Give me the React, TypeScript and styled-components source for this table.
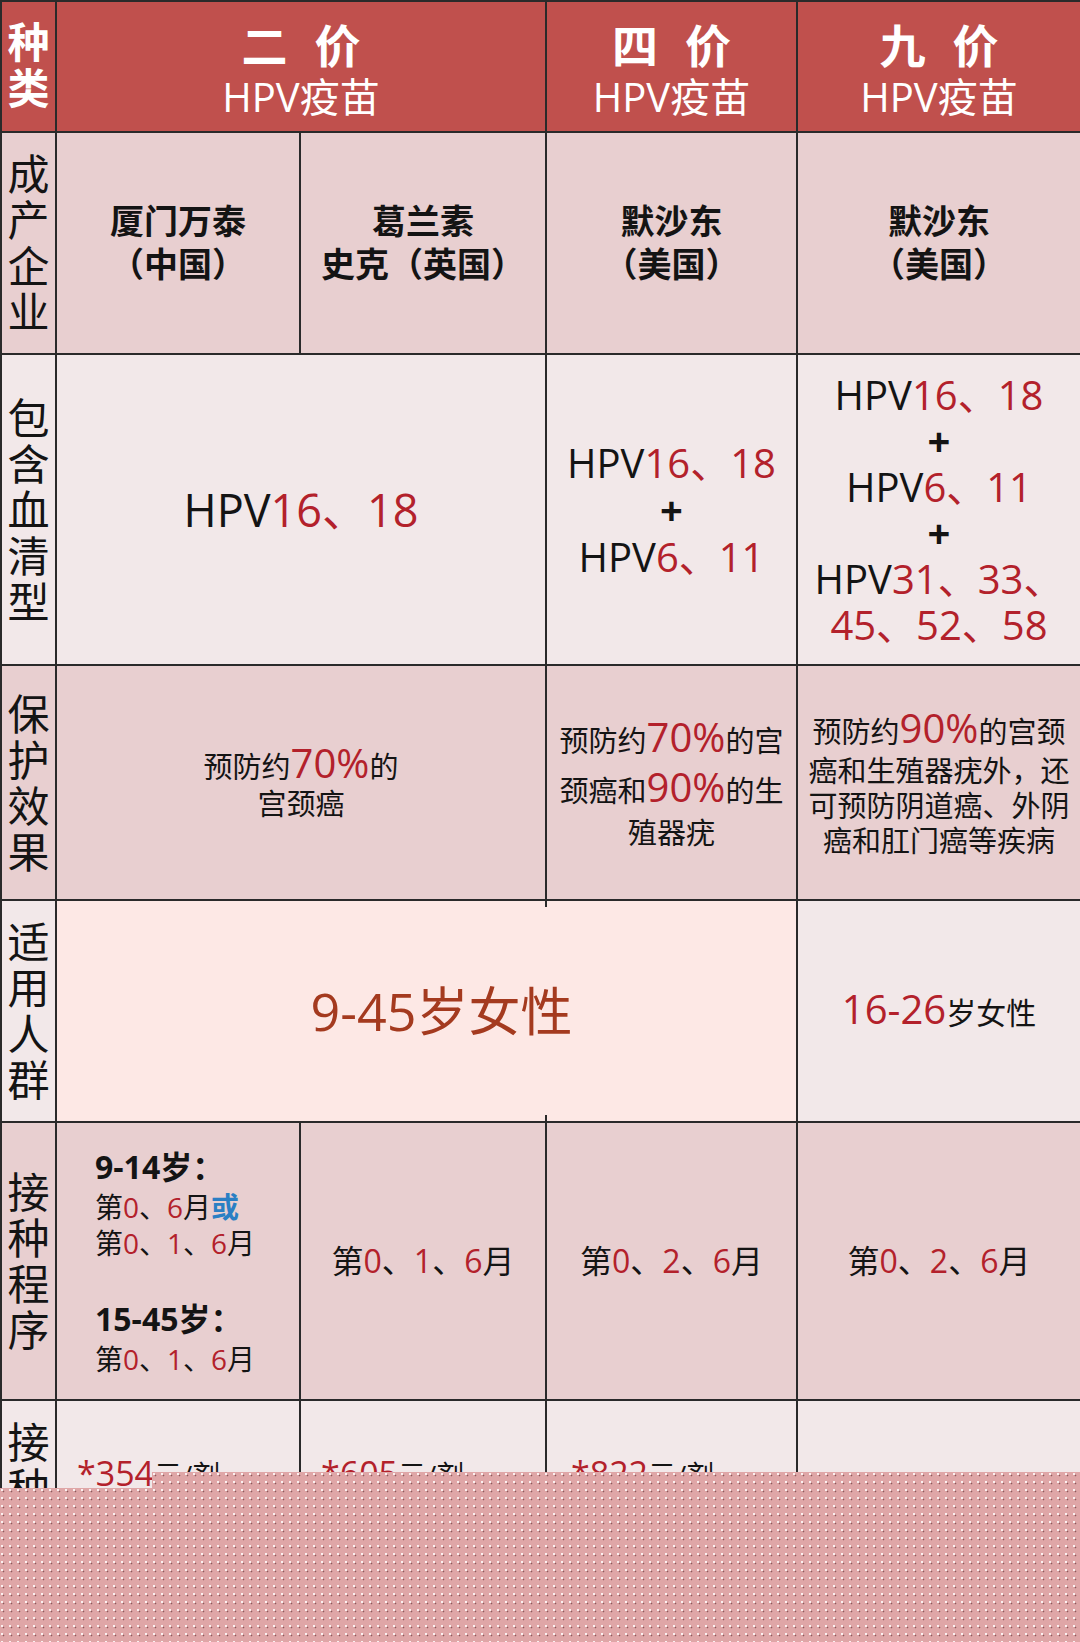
import React from "react";
import styled, { createGlobalStyle } from "styled-components";

const LINE = "#2a2a2a";
const INK = "#141414";
const RED = "#b3212b";
const HEAD = "#c0504d";
const PINK = "#e8cfd0";
const LIGHT = "#f2e8e9";
const PEACH = "#fde8e5";
const FONT = `"Open Sans", "Noto Sans CJK SC", sans-serif`;

const Global = createGlobalStyle`
  html, body { margin: 0; padding: 0; background: ${LIGHT}; }
  body { font-family: ${FONT}; }
`;

const Page = styled.div`
  position: relative;
  width: 1080px;
  height: 1642px;
  overflow: hidden;
  background: ${LIGHT};
  font-family: ${FONT};
`;

const Table = styled.div`
  display: grid;
  grid-template-columns: 55px 244px 246px 251px 282px;
  grid-template-rows: 131px 222px 311px 235px 222px 278px 320px;
  border-top: 2px solid ${LINE};
  border-left: 2px solid ${LINE};
`;

const Cell = styled.div<{ $bg: string; $span?: number; $edge?: boolean }>`
  box-sizing: border-box;
  position: relative;
  grid-column: span ${(p) => p.$span ?? 1};
  background: ${(p) => p.$bg};
  border-bottom: 2px solid ${LINE};
  border-right: ${(p) => (p.$edge ? "none" : `2px solid ${LINE}`)};
  display: flex;
  flex-direction: column;
  align-items: center;
  justify-content: center;
  text-align: center;
  color: ${INK};
  white-space: nowrap;
`;

const LabelCell = styled(Cell)<{ $head?: boolean; $top?: number }>`
  font-size: 42px;
  line-height: 46px;
  font-weight: ${(p) => (p.$head ? 700 : 400)};
  color: ${(p) => (p.$head ? "#fff" : INK)};
  justify-content: ${(p) => (p.$top != null ? "flex-start" : "center")};
  padding-top: ${(p) => p.$top ?? 0}px;
  padding-bottom: ${(p) => (p.$head ? 4 : 0)}px;
`;

const LabelChar = styled.span`
  display: block;
`;

const HeadCell = styled(Cell)`
  color: #fff;
`;

const HeadTitle = styled.div`
  font-size: 46px;
  line-height: 60px;
  font-weight: 700;
  word-spacing: 15px;
`;

const HeadSub = styled.div`
  font-size: 40px;
  line-height: 44px;
  font-weight: 400;
`;

const Company = styled.div`
  font-size: 34px;
  line-height: 43px;
  font-weight: 700;
`;

const Sero = styled.div<{ $size: number; $lh: number }>`
  font-size: ${(p) => p.$size}px;
  line-height: ${(p) => p.$lh}px;
`;

const Num = styled.span`
  color: ${RED};
`;

const Plus = styled.div`
  font-weight: 700;
`;

const Effect = styled.div`
  font-size: 29px;
  line-height: 37px;
`;

const EffectLine = styled.div<{ $lh?: number }>`
  line-height: ${(p) => p.$lh ?? 37}px;
`;

const Pct = styled.span`
  font-size: 40px;
  color: ${RED};
`;

const MergedAge = styled(Cell)`
  padding-left: 30px;
  &::before,
  &::after {
    content: "";
    position: absolute;
    left: 488px;
    width: 2px;
    height: 6px;
    background: ${LINE};
  }
  &::before {
    top: 0;
  }
  &::after {
    bottom: 0;
  }
`;

const AgeBig = styled.div`
  font-size: 52px;
  line-height: 60px;
  color: #a43a1f;
`;

const AgeSmall = styled.div`
  font-size: 30px;
  line-height: 44px;
`;

const AgeNum = styled.span`
  font-size: 40px;
  color: ${RED};
`;

const ScheduleCell = styled(Cell)`
  align-items: flex-start;
  text-align: left;
  padding-left: 38px;
`;

const AgeHead = styled.div`
  font-size: 32px;
  line-height: 44px;
  font-weight: 700;
`;

const Dose = styled.div<{ $size?: number; $lh?: number }>`
  font-size: ${(p) => p.$size ?? 28}px;
  line-height: ${(p) => p.$lh ?? 36}px;
`;

const Or = styled.span`
  color: #2a7fc4;
  font-weight: 700;
`;

const Spacer = styled.div`
  height: 36px;
`;

const PriceCell = styled(Cell)<{ $pad: number }>`
  justify-content: flex-start;
  align-items: flex-start;
  padding: 52px 0 0 ${(p) => p.$pad}px;
`;

const Price = styled.div`
  font-size: 28px;
  line-height: 40px;
`;

const PriceNum = styled.span`
  font-size: 34px;
  color: ${RED};
`;

const LoadingVeil = styled.div`
  position: absolute;
  left: 0;
  right: 0;
  top: 1472px;
  bottom: 0;
  background-color: #dfa6a7;
  background-image: radial-gradient(circle at 2px 2px, #fbf0f0 0 0.9px, transparent 1.3px),
    radial-gradient(circle at 3.5px 3.5px, #8a5a5c 0 0.7px, transparent 1.1px);
  background-size: 8px 8px;
  clip-path: polygon(0 16px, 152px 16px, 152px 0, 100% 0, 100% 100%, 0 100%);
`;

const Label = ({ text, bg, head, top }: { text: string; bg: string; head?: boolean; top?: number }) => (
  <LabelCell $bg={bg} $head={head} $top={top}>
    {[...text].map((c, i) => (
      <LabelChar key={i}>{c}</LabelChar>
    ))}
  </LabelCell>
);

const Head = ({ title, span, edge }: { title: string; span?: number; edge?: boolean }) => (
  <HeadCell $bg={HEAD} $span={span} $edge={edge}>
    <HeadTitle>{title}</HeadTitle>
    <HeadSub>HPV疫苗</HeadSub>
  </HeadCell>
);

export default function App() {
  return (
    <Page>
      <Global />
      <Table>
        {/* header */}
        <Label text="种类" bg={HEAD} head />
        <Head title="二 价" span={2} />
        <Head title="四 价" />
        <Head title="九 价" edge />

        {/* 成产企业 */}
        <Label text="成产企业" bg={PINK} />
        <Cell $bg={PINK}>
          <Company>厦门万泰</Company>
          <Company>（中国）</Company>
        </Cell>
        <Cell $bg={PINK}>
          <Company>葛兰素</Company>
          <Company>史克（英国）</Company>
        </Cell>
        <Cell $bg={PINK}>
          <Company>默沙东</Company>
          <Company>（美国）</Company>
        </Cell>
        <Cell $bg={PINK} $edge>
          <Company>默沙东</Company>
          <Company>（美国）</Company>
        </Cell>

        {/* 包含血清型 */}
        <Label text="包含血清型" bg={LIGHT} />
        <Cell $bg={LIGHT} $span={2}>
          <Sero $size={45} $lh={56}>
            HPV<Num>16、18</Num>
          </Sero>
        </Cell>
        <Cell $bg={LIGHT}>
          <Sero $size={40} $lh={47}>
            HPV<Num>16、18</Num>
            <Plus>+</Plus>
            HPV<Num>6、11</Num>
          </Sero>
        </Cell>
        <Cell $bg={LIGHT} $edge>
          <Sero $size={40} $lh={46}>
            <div>
              HPV<Num>16、18</Num>
            </div>
            <Plus>+</Plus>
            <div>
              HPV<Num>6、11</Num>
            </div>
            <Plus>+</Plus>
            <div>
              HPV<Num>31、33、</Num>
            </div>
            <div>
              <Num>45、52、58</Num>
            </div>
          </Sero>
        </Cell>

        {/* 保护效果 */}
        <Label text="保护效果" bg={PINK} />
        <Cell $bg={PINK} $span={2}>
          <Effect>
            <EffectLine>
              预防约<Pct>70%</Pct>的
            </EffectLine>
            <EffectLine>宫颈癌</EffectLine>
          </Effect>
        </Cell>
        <Cell $bg={PINK}>
          <Effect>
            <EffectLine $lh={46}>
              预防约<Pct>70%</Pct>的宫
            </EffectLine>
            <EffectLine $lh={46}>
              颈癌和<Pct>90%</Pct>的生
            </EffectLine>
            <EffectLine>殖器疣</EffectLine>
          </Effect>
        </Cell>
        <Cell $bg={PINK} $edge>
          <Effect>
            <EffectLine $lh={42}>
              预防约<Pct>90%</Pct>的宫颈
            </EffectLine>
            <EffectLine $lh={35}>癌和生殖器疣外，还</EffectLine>
            <EffectLine $lh={35}>可预防阴道癌、外阴</EffectLine>
            <EffectLine $lh={35}>癌和肛门癌等疾病</EffectLine>
          </Effect>
        </Cell>

        {/* 适用人群 */}
        <Label text="适用人群" bg={LIGHT} />
        <MergedAge $bg={PEACH} $span={3}>
          <AgeBig>9-45岁女性</AgeBig>
        </MergedAge>
        <Cell $bg={LIGHT} $edge>
          <AgeSmall>
            <AgeNum>16-26</AgeNum>岁女性
          </AgeSmall>
        </Cell>

        {/* 接种程序 */}
        <Label text="接种程序" bg={PINK} />
        <ScheduleCell $bg={PINK}>
          <AgeHead>9-14岁：</AgeHead>
          <Dose>
            第<Num>0</Num>、<Num>6</Num>月<Or>或</Or>
          </Dose>
          <Dose>
            第<Num>0</Num>、<Num>1</Num>、<Num>6</Num>月
          </Dose>
          <Spacer />
          <AgeHead>15-45岁：</AgeHead>
          <Dose>
            第<Num>0</Num>、<Num>1</Num>、<Num>6</Num>月
          </Dose>
        </ScheduleCell>
        <Cell $bg={PINK}>
          <Dose $size={32} $lh={40}>
            第<Num>0</Num>、<Num>1</Num>、<Num>6</Num>月
          </Dose>
        </Cell>
        <Cell $bg={PINK}>
          <Dose $size={32} $lh={40}>
            第<Num>0</Num>、<Num>2</Num>、<Num>6</Num>月
          </Dose>
        </Cell>
        <Cell $bg={PINK} $edge>
          <Dose $size={32} $lh={40}>
            第<Num>0</Num>、<Num>2</Num>、<Num>6</Num>月
          </Dose>
        </Cell>

        {/* 接种价格 */}
        <Label text="接种价格" bg={LIGHT} top={18} />
        <PriceCell $bg={LIGHT} $pad={20}>
          <Price>
            <PriceNum>*354</PriceNum>元/剂
          </Price>
        </PriceCell>
        <PriceCell $bg={LIGHT} $pad={20}>
          <Price>
            <PriceNum>*605</PriceNum>元/剂
          </Price>
        </PriceCell>
        <PriceCell $bg={LIGHT} $pad={24}>
          <Price>
            <PriceNum>*822</PriceNum>元/剂
          </Price>
        </PriceCell>
        <PriceCell $bg={LIGHT} $pad={24} $edge />
      </Table>
      <LoadingVeil />
    </Page>
  );
}
